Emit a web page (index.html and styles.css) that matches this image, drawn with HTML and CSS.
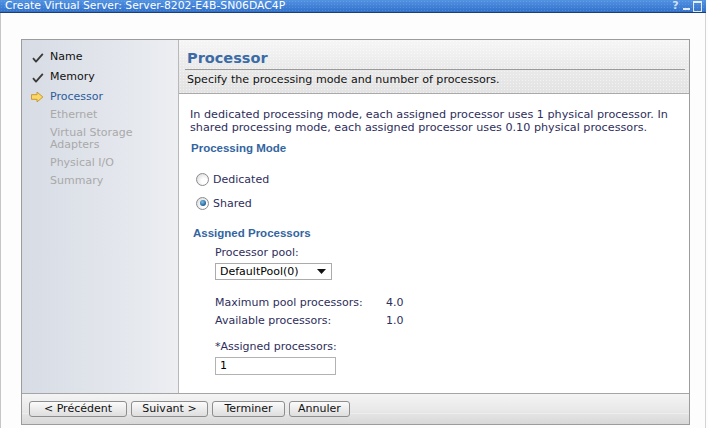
FILE: index.html
```html
<!DOCTYPE html>
<html lang="en">
<head>
<meta charset="utf-8">
<title>Create Virtual Server</title>
<link rel="stylesheet" href="styles.css">
</head>
<body>
<div class="window">
  <div class="titlebar">
    <span class="title">Create Virtual Server: Server-8202-E4B-SN06DAC4P</span>
    <span class="tb-icons">
      <span class="tb-help">?</span>
      <svg class="tb-min" width="9" height="11" viewBox="0 0 9 11"><rect x="1" y="7" width="7" height="2" fill="#fff" opacity="0.85"/></svg>
      <svg class="tb-max" width="9" height="11" viewBox="0 0 9 11"><rect x="0.5" y="0.5" width="8" height="10" fill="none" stroke="#fff" stroke-width="1" opacity="0.85"/><rect x="1" y="1" width="7" height="1" fill="#fff" opacity="0.85"/></svg>
    </span>
  </div>
  <div class="client">
    <div class="wizard">
      <div class="main">
        <nav class="steps">
          <div class="step done">
            <span class="step-icon"><svg width="12" height="10" viewBox="0 0 12 10"><path d="M1 5.2 L4 8.6 L10.8 0.8" fill="none" stroke="#3a3a3a" stroke-width="1.8" stroke-linejoin="round"/></svg></span>
            <span class="step-label">Name</span>
          </div>
          <div class="step done">
            <span class="step-icon"><svg width="12" height="10" viewBox="0 0 12 10"><path d="M1 5.2 L4 8.6 L10.8 0.8" fill="none" stroke="#3a3a3a" stroke-width="1.8" stroke-linejoin="round"/></svg></span>
            <span class="step-label">Memory</span>
          </div>
          <div class="step current">
            <span class="step-icon"><svg width="14" height="12" viewBox="0 0 14 12"><path d="M0.5 3.5 H6.5 V0.7 L12.8 6 L6.5 11.3 V8.5 H0.5 Z" fill="#f9d867" stroke="#c8922a" stroke-width="1" stroke-linejoin="round"/></svg></span>
            <span class="step-label">Processor</span>
          </div>
          <div class="step pending"><span class="step-icon"></span><span class="step-label">Ethernet</span></div>
          <div class="step pending"><span class="step-icon"></span><span class="step-label">Virtual Storage Adapters</span></div>
          <div class="step pending"><span class="step-icon"></span><span class="step-label">Physical I/O</span></div>
          <div class="step pending"><span class="step-icon"></span><span class="step-label">Summary</span></div>
        </nav>
        <section class="page">
          <header class="page-head">
            <h1 class="page-title">Processor</h1>
            <p class="page-desc">Specify the processing mode and number of processors.</p>
          </header>
          <div class="page-body">
            <p class="intro">In dedicated processing mode, each assigned processor uses 1 physical processor. In<br>shared processing mode, each assigned processor uses 0.10 physical processors.</p>
            <h2 class="section mode-title">Processing Mode</h2>
            <div class="radio-row first"><span class="radio"></span><span class="radio-label">Dedicated</span></div>
            <div class="radio-row"><span class="radio checked"></span><span class="radio-label">Shared</span></div>
            <h2 class="section assigned-title">Assigned Processors</h2>
            <div class="fields">
              <div class="field-label">Processor pool:</div>
              <div class="select"><span>DefaultPool(0)</span><svg width="9" height="5" viewBox="0 0 9 5"><path d="M0 0 H9 L4.5 5 Z" fill="#111"/></svg></div>
              <div class="stats">
                <span>Maximum pool processors:</span><span>4.0</span>
                <span>Available processors:</span><span>1.0</span>
              </div>
              <div class="field-label assigned-label">*Assigned processors:</div>
              <div class="textbox">1</div>
            </div>
          </div>
        </section>
      </div>
      <footer class="buttons">
        <span class="btn btn-prev">&lt; Précédent</span>
        <span class="btn btn-next">Suivant &gt;</span>
        <span class="btn btn-finish">Terminer</span>
        <span class="btn btn-cancel">Annuler</span>
      </footer>
    </div>
  </div>
</div>
</body>
</html>
```

FILE: styles.css
```css
* { box-sizing: border-box; }
html, body { margin: 0; padding: 0; background: #fdfdfd; }
body {
  font-family: "DejaVu Sans", Verdana, sans-serif;
  font-size: 11px;
  color: #222;
  width: 708px;
  height: 428px;
  overflow: hidden;
}
.window { width: 706px; height: 428px; }

.titlebar {
  height: 13px;
  border-bottom: 1px solid #1c3f75;
  background:
    radial-gradient(circle, rgba(255,255,255,0.13) 0.6px, transparent 1px) 0 0 / 3px 3px,
    linear-gradient(#5292e2, #3271ca);
  display: flex;
  align-items: center;
  justify-content: space-between;
  padding: 0 4px 0 5px;
}
.title {
  color: #fff;
  font-size: 10.8px;
  line-height: 12px;
  white-space: nowrap;
}
.tb-icons { display: flex; align-items: center; gap: 2px; height: 12px; }
.tb-help { color: #cfe0f5; font-size: 11px; font-weight: bold; line-height: 12px; width: 9px; text-align: center; }
.tb-min, .tb-max { display: block; }

.client {
  height: 415px;
  border-left: 1px solid #c6c6c6;
  border-right: 1px solid #d4d4d4;
  padding: 26px 0 0 20px;
}
.wizard {
  width: 669px;
  height: 386px;
  border: 1px solid #9c9c9c;
  display: flex;
  flex-direction: column;
}
.main { display: flex; height: 353px; }

.steps {
  width: 157px;
  border-right: 1px solid #b8b8b8;
  background: linear-gradient(to right, #d7dce5, #e3e6ec 60%, #eceef2);
  padding-top: 11px;
}
.step { display: flex; align-items: flex-start; line-height: 12px; margin-bottom: 6px; }
.step.done { margin-bottom: 8px; color: #111; }
.step.current { margin-bottom: 6px; color: #2b5c9c; }
.step.pending { color: #a9a9a9; }
.step-icon { width: 13px; height: 12px; margin-left: 9px; margin-right: 6px; flex: none; display: flex; align-items: center; }
.step.done .step-icon { padding-top: 1px; margin-left: 10px; margin-right: 5px; }
.step-label { padding-right: 8px; }

.page { width: 510px; background: #fff; display: flex; flex-direction: column; }
.page-head {
  height: 54px;
  border-bottom: 1px solid #a9a9a9;
  background:
    radial-gradient(circle, rgba(255,255,255,0.5) 0.6px, transparent 1px) 0 0 / 3px 3px,
    linear-gradient(#f6f6f6, #ebebeb 45%, #e3e3e3);
  padding: 9px 4px 0 6px;
}
.page-title {
  margin: 0;
  font-size: 14.5px;
  font-weight: bold;
  line-height: 18px;
  color: #3b6ba6;
  padding: 0 0 2px 2px;
  border-bottom: 1px solid #9a9a9a;
}
.page-desc { margin: 3px 0 0 2px; line-height: 14px; color: #111; font-size: 11.1px; }

.page-body { padding: 15px 4px 0 0; color: #2e2e5c; }
.intro { margin: 0 0 0 11px; line-height: 12.5px; white-space: nowrap; font-size: 11.2px; }
.section {
  margin: 0;
  font-family: "Liberation Sans", Arial, sans-serif;
  font-size: 11.5px;
  font-weight: bold;
  line-height: 14px;
  color: #33659f;
}
.mode-title { margin: 7px 0 0 12px; }
.radio-row { display: flex; align-items: center; height: 20px; margin: 4px 0 0 17px; }
.radio-row.first { margin-top: 14px; }
.radio {
  width: 13px; height: 13px;
  border-radius: 50%;
  border: 1px solid #8b8b8b;
  background: radial-gradient(circle at 65% 65%, #ffffff 25%, #d4d4d4 100%);
  margin-right: 4px;
  display: flex; align-items: center; justify-content: center;
}
.radio.checked::after {
  content: "";
  width: 6px; height: 6px; border-radius: 50%;
  background: radial-gradient(circle at 40% 35%, #7fc0e8, #1d5f97 70%);
}
.assigned-title { margin: 13px 0 0 14px; }

.fields { margin-left: 36px; }
.field-label { line-height: 14px; margin-top: 6px; }
.select {
  width: 117px; height: 17px;
  margin-top: 3px;
  border: 1px solid #ababab;
  background: #fff;
  color: #000;
  display: flex; align-items: center; justify-content: space-between;
  padding: 0 5px 0 4px;
  line-height: 14px;
}
.stats {
  display: grid;
  grid-template-columns: 171px auto;
  line-height: 18px;
  margin-top: 14px;
}
.assigned-label { margin-top: 10px; }
.textbox {
  width: 121px; height: 18px;
  margin-top: 3px;
  border: 1px solid #b2b2b2;
  background: #fff;
  color: #000;
  line-height: 16px;
  padding-left: 4px;
}

.buttons {
  height: 31px;
  border-top: 1px solid #a5a5a5;
  background:
    linear-gradient(to bottom, transparent 19px, rgba(255,255,255,0.35) 19px, rgba(255,255,255,0.35) 20px, transparent 20px),
    linear-gradient(#f4f4f4, #e8e8e8 55%, #d8d8d8);
  display: flex;
  gap: 4px;
  padding: 7px 0 0 7px;
}
.btn {
  height: 16px;
  border: 1px solid #8e8e8e;
  border-radius: 3px;
  background: linear-gradient(#fbfbfb, #ececec 50%, #dedede);
  color: #111;
  line-height: 14px;
  text-align: center;
  white-space: nowrap;
}
.btn-prev { width: 98px; }
.btn-next { width: 77px; }
.btn-finish { width: 73px; }
.btn-cancel { width: 61px; }
```
